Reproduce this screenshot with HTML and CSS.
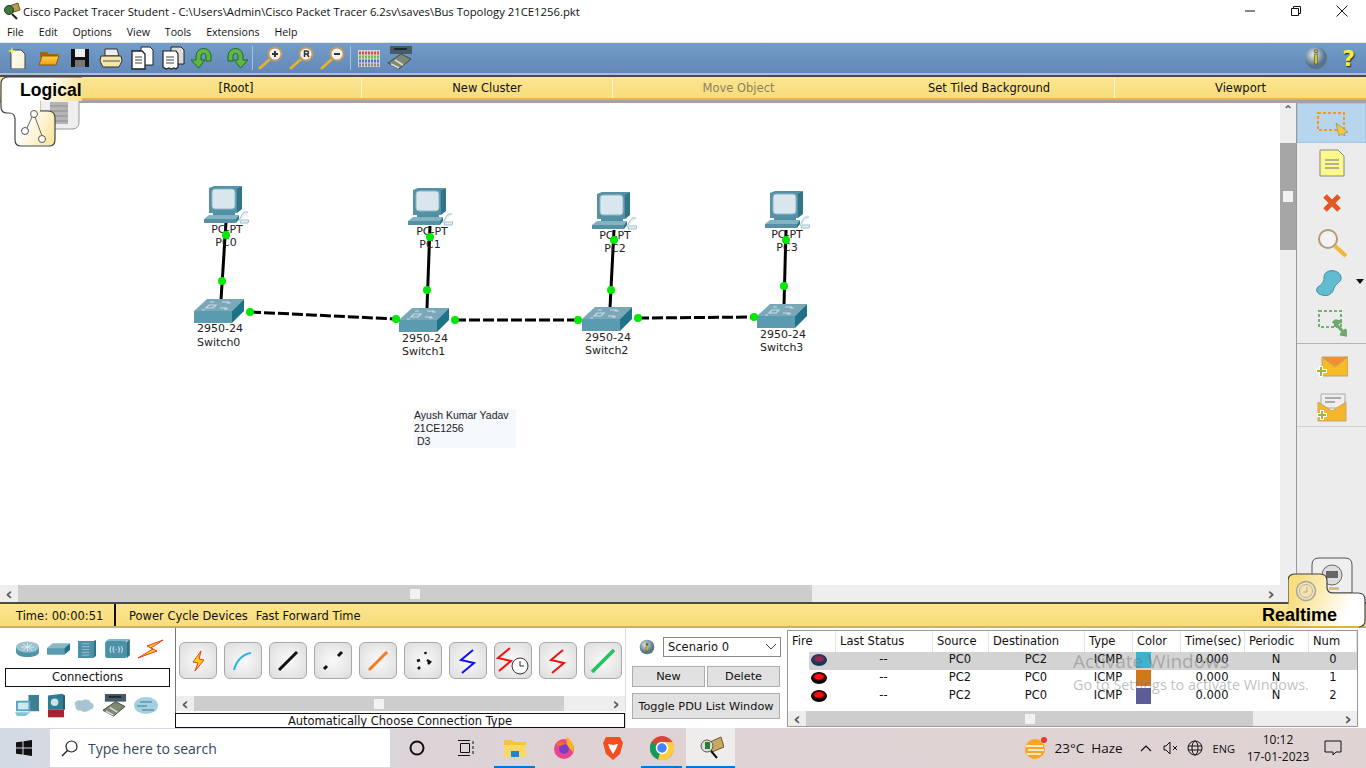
FILE: index.html
```html
<!DOCTYPE html>
<html lang="en">

<head>
    <meta charset="UTF-8">
    <title>Cisco Packet Tracer Student</title>
    <link rel="stylesheet" href="styles.css">
</head>

<body>
    <svg class="defs" width="0" height="0">
        <defs>
            <linearGradient id="gold" x1="0" y1="0" x2="0" y2="1"><stop offset="0" stop-color="#fbd33d"/><stop offset="1" stop-color="#f29a1f"/></linearGradient>
            <linearGradient id="logicalfade" gradientUnits="userSpaceOnUse" x1="15" y1="15" x2="75" y2="45"><stop offset="0" stop-color="#fff"/><stop offset=".35" stop-color="#fff"/><stop offset="1" stop-color="#f9de7e"/></linearGradient>
            <linearGradient id="realfade" gradientUnits="userSpaceOnUse" x1="5" y1="20" x2="60" y2="40"><stop offset="0" stop-color="#f9de7e"/><stop offset="1" stop-color="#fff"/></linearGradient>
            <radialGradient id="ball" cx=".4" cy=".35"><stop offset="0" stop-color="#e8edf2"/><stop offset="1" stop-color="#58748c"/></radialGradient>
            <linearGradient id="docfill" x1="0" y1="0" x2="1" y2="1"><stop offset="0" stop-color="#fff"/><stop offset="1" stop-color="#f3efcf"/></linearGradient>
            <symbol id="pc" viewBox="0 0 45 38">
                <path d="M5 2 10 0h28l-5 2v25H5z" fill="#5590a5"/>
                <path d="M33 2l5-2v23l-5 4z" fill="#2f7488"/>
                <rect x="8" y="3" width="23" height="20" rx="3" fill="#d9e6ee" stroke="#8ab8c7"/>
                <path d="M9 27h22v2H9z" fill="#4f8ea3"/>
                <path d="M5 29h30l-3 4H0z" fill="#82b3c3"/>
                <path d="M0 33h32v4H0z" fill="#5590a5"/>
                <path d="M32 33l3-4v4l-3 4z" fill="#2f7488"/>
                <path d="M35 35c2-4 3-8 6-9h3M36 37h8l1-3h-8z" fill="#e8f0f3" stroke="#9cc0cc"/>
            </symbol>
            <symbol id="switch" viewBox="0 0 50 24">
                <path d="M0 12 13 0h37L38 12z" fill="#7ba8b8"/>
                <path d="M0 12h38v12H0z" fill="#5b9bb0"/>
                <path d="M38 12 50 0v12L38 24z" fill="#1f7389"/>
                <path d="M12 9h7l3-3h-7zM26 9h7M28 3h7M8 11h3M30 10h4M33 4h4M16 3h4" stroke="#c6dbe3" stroke-width="1.2" fill="none"/>
            </symbol>
            <symbol id="bolt" viewBox="0 0 25 20">
                <path d="M25 1 9 7l6 3L0 19l19-7-6-3z" fill="#f9d21f" stroke="#ef3b17" stroke-linejoin="round"/>
            </symbol>
            <symbol id="zoom" viewBox="0 0 26 24">
                <path d="M2 22 11 14" stroke="#e5b22e" stroke-width="3" stroke-linecap="round"/>
                <circle cx="17" cy="8" r="6.500" fill="#f2f2f2" stroke="#c39a5e" stroke-width="2"/>
            </symbol>
            <symbol id="mail" viewBox="0 0 32 24">
                <path d="M6 2h26v19H6z" fill="#f6bb28" stroke="#b9a36d"/>
                <path d="M6 2l13 10L32 2" fill="#f08f33" stroke="#c4a86a"/>
                <path d="M5 11v11M0 16h11" stroke="#fff" stroke-width="4"/>
                <path d="M5 12v9M1 16h9" stroke="#9eb34a" stroke-width="2"/>
            </symbol>
        </defs>
    </svg>

    <header class="title-bar">
        <svg class="app-icon" width="18" height="18" viewBox="0 0 18 18"><path d="M6 4l9-3 2 7-9 3z" fill="#b99b50" stroke="#6b5a2a"/><circle cx="6" cy="8" r="4.500" fill="#3c7a3a" stroke="#333"/><path d="M9 12l5 5" stroke="#222" stroke-width="2"/></svg>
        <span class="title-text">Cisco Packet Tracer Student - C:\Users\Admin\Cisco Packet Tracer 6.2sv\saves\Bus Topology 21CE1256.pkt</span>
        <div class="win-buttons">
            <svg width="12" height="12" viewBox="0 0 12 12"><path d="M1 6h10" stroke="#111"/></svg>
            <svg width="12" height="12" viewBox="0 0 12 12"><path d="M1.500 3.500h7v7h-7zM3.500 3.500v-2h7v7h-2" fill="none" stroke="#111"/></svg>
            <svg width="12" height="12" viewBox="0 0 12 12"><path d="M.5.500l11 11M11.500.500l-11 11" stroke="#111"/></svg>
        </div>
    </header>

    <nav class="menu-bar">
        <span>File</span><span>Edit</span><span>Options</span><span>View</span><span>Tools</span><span>Extensions</span><span>Help</span>
    </nav>

    <div class="tool-bar">
        <button class="tool"><svg width="20" height="22" viewBox="0 0 20 22"><path d="M3 3h10l4 4v15H3z" fill="url(#docfill)" stroke="#444"/><path d="M4 0l1 3 3 1-3 1-1 3-1-3-3-1 3-1z" fill="#f8f04a"/></svg></button>
        <button class="tool"><svg width="22" height="16" viewBox="0 0 22 16"><path d="M2 2h7l2 2h9v3H2z" fill="#a86508"/><path d="M1 15 4 6h17l-3 9z" fill="url(#gold)" stroke="#8a5a08"/></svg></button>
        <button class="tool"><svg width="20" height="20" viewBox="0 0 20 20"><path d="M1 1h18v18H1z" fill="#111"/><path d="M5 1h10v8H5z" fill="#eee"/><path d="M5 12h10v7H5z" fill="#777"/></svg></button>
        <button class="tool"><svg width="24" height="20" viewBox="0 0 24 20"><path d="M6 1h12l2 7H6z" fill="#eee" stroke="#333"/><path d="M2 8h20l1 5-3 6H4l-3-6z" fill="#f3e6a8" stroke="#333"/><path d="M4 13h17" stroke="#555"/></svg></button>
        <button class="tool"><svg width="24" height="24" viewBox="0 0 24 24"><path d="M11 1h9l3 3v15H11z" fill="#fff" stroke="#222"/><path d="M2 5h10l3 3v15H2z" fill="#fff" stroke="#222" stroke-width="1.300"/><path d="M5 11h7M5 14h7M5 17h7" stroke="#444"/></svg></button>
        <button class="tool"><svg width="24" height="24" viewBox="0 0 24 24"><path d="M10 1h10l3 3v14H10z" fill="#ddd" stroke="#222"/><path d="M2 5h13l2 3v13l-2 2-2-1-3 1-2-1-3 1-3-2z" fill="#fff" stroke="#222" stroke-width="1.200"/><path d="M5 11h8M5 14h8M5 17h8" stroke="#444"/></svg></button>
        <button class="tool"><svg width="26" height="24" viewBox="0 0 26 24"><path d="M5 14V10a7 7 0 0 1 15 0v5h-5v-5a2 2 0 0 0-5 0v4h4l-6.500 8L0 14z" fill="#5fb648" stroke="#1e6a1e"/></svg></button>
        <button class="tool"><svg width="26" height="24" viewBox="0 0 26 24"><path d="M21 14V10a7 7 0 0 0-15 0v5h5v-5a2 2 0 0 1 5 0v4h-4l6.500 8L26 14z" fill="#5fb648" stroke="#1e6a1e"/></svg></button>
        <i class="tool-sep"></i>
        <button class="tool"><svg width="26" height="24"><use href="#zoom"/><path d="M14 8h6M17 5v6" stroke="#333" stroke-width="2"/></svg></button>
        <button class="tool"><svg width="26" height="24"><use href="#zoom"/><path d="M15.500 11V5h2.500a1.500 1.500 0 0 1 0 3h-2.500M18 8l2 3" stroke="#333" stroke-width="1.500" fill="none"/></svg></button>
        <button class="tool"><svg width="26" height="24"><use href="#zoom"/><path d="M14 8h6" stroke="#333" stroke-width="2"/></svg></button>
        <i class="tool-sep"></i>
        <button class="tool"><svg width="22" height="17" viewBox="0 0 22 17"><rect width="22" height="17" fill="#d6d6d6"/><path d="M1 3h20" stroke="#d94f4f" stroke-width="3" stroke-dasharray="2 1"/><path d="M1 7h20" stroke="#6fbf4a" stroke-width="3" stroke-dasharray="2 1"/><path d="M1 11h20" stroke="#4a6fd9" stroke-width="3" stroke-dasharray="2 1"/><path d="M1 15h20" stroke="#888" stroke-width="3" stroke-dasharray="2 1"/></svg></button>
        <button class="tool"><svg width="26" height="26" viewBox="0 0 26 26"><path d="M3 1h22v8H3z" fill="#475a68"/><path d="M7 3h13v2H7z" fill="#1c2a33"/><path d="M1 18 14 9l10 5-12 10z" fill="#7d8a72" stroke="#444"/><path d="M4 19l8 4M8 15l8 5" stroke="#ddd" stroke-width="1.500"/></svg></button>
        <div class="tool-right">
            <svg width="24" height="24" viewBox="0 0 24 24"><circle cx="12" cy="12" r="11" fill="url(#ball)"/><text x="12" y="18" class="info-i">i</text></svg>
            <span class="help-mark">?</span>
        </div>
    </div>

    <div class="tab-bar">
        <span class="tab-cell">[Root]</span>
        <span class="tab-cell">New Cluster</span>
        <span class="tab-cell disabled no-line">Move Object</span>
        <span class="tab-cell">Set Tiled Background</span>
        <span class="tab-cell">Viewport</span>
    </div>

    <main class="work-row">
        <div class="canvas-wrap">
            <div class="canvas-col">
                <div class="canvas">
                    <svg class="links" width="1280" height="483" viewBox="0 103 1280 483">
                        <g class="link"><path d="M226 222 221 300"/><path d="M430 226 427 308"/><path d="M614 230 610 308"/><path d="M786 230 784 305"/></g>
                        <g class="link dashed"><path d="M250 312 396 319"/><path d="M455 320 578 320"/><path d="M638 318 754 317"/></g>
                        <use href="#pc" x="204" y="186" width="45" height="38"/>
                        <use href="#pc" x="408" y="188" width="45" height="38"/>
                        <use href="#pc" x="592" y="192" width="45" height="38"/>
                        <use href="#pc" x="765" y="191" width="45" height="38"/>
                        <use href="#switch" x="194" y="299" width="50" height="24"/>
                        <use href="#switch" x="399" y="308" width="50" height="24"/>
                        <use href="#switch" x="582" y="307" width="50" height="24"/>
                        <use href="#switch" x="757" y="304" width="50" height="24"/>
                    </svg>
                    <span class="label c" style="left:227px;top:120px">PC-PT</span>
                    <span class="label c" style="left:226px;top:133px">PC0</span>
                    <span class="label c" style="left:432px;top:122px">PC-PT</span>
                    <span class="label c" style="left:430px;top:135px">PC1</span>
                    <span class="label c" style="left:615px;top:126px">PC-PT</span>
                    <span class="label c" style="left:615px;top:139px">PC2</span>
                    <span class="label c" style="left:787px;top:125px">PC-PT</span>
                    <span class="label c" style="left:787px;top:138px">PC3</span>
                    <span class="label" style="left:197px;top:219px">2950-24</span>
                    <span class="label" style="left:197px;top:233px">Switch0</span>
                    <span class="label" style="left:402px;top:229px">2950-24</span>
                    <span class="label" style="left:402px;top:242px">Switch1</span>
                    <span class="label" style="left:585px;top:228px">2950-24</span>
                    <span class="label" style="left:585px;top:241px">Switch2</span>
                    <span class="label" style="left:760px;top:225px">2950-24</span>
                    <span class="label" style="left:760px;top:238px">Switch3</span>
                    <svg class="links" width="1280" height="483" viewBox="0 103 1280 483">
                        <g class="dot">
                            <circle cx="226" cy="235" r="4"/><circle cx="222" cy="281" r="4"/>
                            <circle cx="430" cy="237" r="4"/><circle cx="427" cy="290" r="4"/>
                            <circle cx="614" cy="240" r="4"/><circle cx="611" cy="290" r="4"/>
                            <circle cx="786" cy="240" r="4"/><circle cx="784" cy="286" r="4"/>
                            <circle cx="250" cy="312" r="4"/><circle cx="396" cy="319" r="4"/>
                            <circle cx="455" cy="320" r="4"/><circle cx="578" cy="320" r="4"/>
                            <circle cx="638" cy="318" r="4"/><circle cx="754" cy="317" r="4"/>
                        </g>
                    </svg>
                    <div class="note">Ayush Kumar Yadav<br>21CE1256<br>&nbsp;D3</div>
                </div>
                <div class="scroll-h">
                    <span class="arrow">&#8249;</span>
                    <div class="track"><div class="thumb" style="width:794px"><i></i></div></div>
                    <span class="arrow">&#8250;</span>
                </div>
            </div>
            <div class="scroll-v">
                <span class="arrow up">&#8963;</span>
                <div class="thumb-v"><i></i></div>
            </div>
        </div>

        <aside class="side-bar">
            <div class="side-item selected"><svg width="32" height="26" viewBox="0 0 32 26"><path d="M2 3h26v17H2z" fill="none" stroke="#f39c12" stroke-width="2" stroke-dasharray="3 2"/><path d="M20 13l12 9-4 1 1 3-4-2-2 2z" fill="#f5c930" stroke="#888" stroke-width=".7"/></svg></div>
            <div class="side-item"><svg width="26" height="28" viewBox="0 0 26 28"><path d="M1 1h18l6 6v20H1z" fill="#fdf88a" stroke="#888"/><path d="M6 11h14M6 15h14M6 19h14" stroke="#999" stroke-width="1.300"/></svg></div>
            <div class="side-item"><svg width="20" height="20" viewBox="0 0 20 20"><path d="M3 3l14 14M17 3 3 17" stroke="#e25822" stroke-width="5"/></svg></div>
            <div class="side-item"><svg width="32" height="30" viewBox="0 0 32 30"><circle cx="12" cy="11" r="9" fill="#f2f2f2" stroke="#b59a78" stroke-width="2"/><path d="M19 18 30 28" stroke="#f2b632" stroke-width="4"/></svg></div>
            <div class="side-item"><svg class="blob" width="26" height="27" viewBox="0 0 26 27"><path d="M11 2C15-1 24 1 25 7 26 12 20 13 18 18 17 24 11 27 6 25 1 24-1 20 2 17 6 14 8 12 8 8 8 5 9 3 11 2z" fill="#62bccf" stroke="#3c8fa5"/></svg><i class="caret"></i></div>
            <div class="side-item"><svg width="30" height="28" viewBox="0 0 30 28"><path d="M2 2h22v16H2z" fill="none" stroke="#6fb36f" stroke-width="2" stroke-dasharray="3 2"/><path d="M16 12l13 14M18 18l1-6 6 1M28 20l1 6-6-1" fill="#6fa86f" stroke="#6fa86f" stroke-width="3"/></svg></div>
            <div class="side-group">
                <div class="side-item mail"><svg width="32" height="24"><use href="#mail"/></svg></div>
                <div class="side-item mail"><svg width="32" height="30" viewBox="0 0 32 30"><path d="M5 2h24v14H5z" fill="#eee" stroke="#aaa"/><path d="M9 6h16M9 10h10" stroke="#aaa" stroke-width="2"/><path d="M2 10v19h28V10L16 19z" fill="#f6b62c" stroke="#c4a86a"/><path d="M6 18v10M1 23h10" stroke="#fff" stroke-width="4"/><path d="M6 19v8M2 23h8" stroke="#9eb34a" stroke-width="2"/></svg></div>
            </div>
        </aside>
    </main>

    <div class="status-bar">
        <span class="time-cell">Time: 00:00:51</span>
        <span class="status-links"><span>Power Cycle Devices</span><span>Fast Forward Time</span></span>
    </div>

    <section class="bottom">
        <div class="device-panel">
            <div class="device-row">
                <svg width="23" height="16" viewBox="0 0 23 16"><path d="M0 6v5c0 3 5 5 11.500 5S23 14 23 11V6z" fill="#4e93a9"/><ellipse cx="11.500" cy="6" rx="11.500" ry="5.500" fill="#9bc3cf"/><path d="M5 6h13M11.500 2v8M7 3l9 6M16 3l-9 6" stroke="#e6f0f3" stroke-width=".8"/></svg>
                <svg width="23" height="12" viewBox="0 0 24 12"><path d="M0 5 6 0h18l-6 5z" fill="#8db6c3"/><path d="M0 5h18v7H0z" fill="#5b9bb0"/><path d="M18 5l6-5v7l-6 5z" fill="#1f7389"/></svg>
                <svg width="19" height="18" viewBox="0 0 20 19"><path d="M0 1h16v18H0z" fill="#4c91a8"/><path d="M16 1l3-1v17l-3 2z" fill="#2f7488"/><path d="M4 4h8M4 7h8M4 10h8M4 13h8M4 16h8" stroke="#88b8c6" stroke-width="1.200"/></svg>
                <svg width="25" height="19" viewBox="0 0 26 20"><rect y="2" width="23" height="18" rx="2" fill="#4c91a8"/><path d="M23 3l3-3v17l-3 3z" fill="#2f7488"/><path d="M1 2 4 0h22l-3 2z" fill="#86b6c5"/><text x="11.500" y="14" class="wifi">((·))</text></svg>
                <svg width="25" height="20"><use href="#bolt"/></svg>
            </div>
            <div class="device-label">Connections</div>
            <div class="device-row lower">
                <svg width="25" height="23" viewBox="0 0 26 24"><path d="M14 1h11v17H14z" fill="#3f7f93"/><path d="M1 7h15v11H1z" fill="#5ba6bd"/><path d="M3 9h11v7H3z" fill="#cfe7ee"/><path d="M0 19h16l-5 4H2z" fill="#7fc3d4"/></svg>
                <svg width="18" height="25" viewBox="0 0 19 25"><path d="M1 2l15-2v17H1z" fill="#2e7d95"/><path d="M16 0l3 2v15h-3z" fill="#1f5f72"/><circle cx="8" cy="9" r="4" fill="#cfe2e8"/><path d="M1 17h17v8H1z" fill="#a5252f"/></svg>
                <svg width="23" height="13" viewBox="0 0 24 15"><path d="M3 8c-4-5 4-8 7-6 4-3 10-1 10 2 5 1 5 7 0 8-4 4-10 3-12 1-3 1-6-2-5-5z" fill="#a7c5d1"/></svg>
                <svg width="25" height="27" viewBox="0 0 26 26"><path d="M3 1h22v8H3z" fill="#475a68"/><path d="M7 3h13v2H7z" fill="#1c2a33"/><path d="M1 18 14 9l10 5-12 10z" fill="#7d8a72" stroke="#444"/><path d="M4 19l8 4M8 15l8 5" stroke="#ddd" stroke-width="1.500"/></svg>
                <svg width="24" height="17" viewBox="0 0 24 17"><ellipse cx="12" cy="8.500" rx="12" ry="8.500" fill="#a4d0df"/><path d="M6 5h12M3 9h10M8 13h12" stroke="#5b97ae" stroke-width="1.500"/></svg>
            </div>
        </div>

        <div class="conn-panel">
            <div class="conn-row">
                <div class="conn-btn"><svg width="14" height="22" viewBox="0 0 14 22"><path d="M10 1 2 12l5 1-3 8 9-11-5-1z" fill="#f9d21f" stroke="#ef3b17"/></svg></div>
                <div class="conn-btn"><svg width="24" height="24" viewBox="0 0 24 24"><path d="M3 21C5 12 12 5 20 4" stroke="#27b3e8" stroke-width="2" fill="none"/></svg></div>
                <div class="conn-btn"><svg width="24" height="24" viewBox="0 0 24 24"><path d="M3 21 21 3" stroke="#111" stroke-width="3"/></svg></div>
                <div class="conn-btn"><svg width="24" height="24" viewBox="0 0 24 24"><path d="M3 20 6 17M17 7 21 3" stroke="#111" stroke-width="3"/></svg></div>
                <div class="conn-btn"><svg width="24" height="24" viewBox="0 0 24 24"><path d="M3 21 21 3" stroke="#f47a1f" stroke-width="3"/></svg></div>
                <div class="conn-btn"><svg width="24" height="24" viewBox="0 0 24 24"><path d="M14 3l1 2M6 12l3-1M16 11l3 2-2 2M7 20l2-2" stroke="#111" stroke-width="2.500" fill="none"/></svg></div>
                <div class="conn-btn"><svg width="24" height="26" viewBox="0 0 24 26"><path d="M17 2 5 12l13 3-12 10" stroke="#1010f0" stroke-width="2" fill="none"/></svg></div>
                <div class="conn-btn"><svg width="36" height="30" viewBox="0 0 36 30"><path d="M15 2 3 12l13 3-12 10" stroke="#f01010" stroke-width="2" fill="none"/><circle cx="25" cy="20" r="8" fill="#fff" stroke="#333"/><path d="M25 15v5h4" stroke="#333" fill="none"/></svg></div>
                <div class="conn-btn"><svg width="24" height="26" viewBox="0 0 24 26"><path d="M17 2 5 12l13 3-12 10" stroke="#f01010" stroke-width="2" fill="none"/></svg></div>
                <div class="conn-btn"><svg width="28" height="28" viewBox="0 0 28 28"><path d="M3 25 25 3" stroke="#1fc45a" stroke-width="3.500"/></svg></div>
            </div>
            <div class="scroll-h small">
                <span class="arrow">&#8249;</span>
                <div class="track"><div class="thumb" style="width:370px"><i></i></div></div>
                <span class="arrow">&#8250;</span>
            </div>
            <div class="conn-label">Automatically Choose Connection Type</div>
        </div>

        <div class="scenario-panel">
            <div class="scenario-top">
                <svg width="16" height="16" viewBox="0 0 24 24"><circle cx="12" cy="12" r="11" fill="url(#ball)"/><text x="12" y="18" class="info-i">i</text></svg>
                <div class="select">Scenario 0<svg width="12" height="8" viewBox="0 0 12 8"><path d="M1 1l5 5 5-5" fill="none" stroke="#444"/></svg></div>
            </div>
            <div class="scenario-btns">
                <button class="grey-btn">New</button>
                <button class="grey-btn">Delete</button>
            </div>
            <button class="grey-btn wide">Toggle PDU List Window</button>
        </div>

        <div class="pdu-panel">
            <div class="pdu-grid pdu-head">
                <span>Fire</span><span>Last Status</span><span>Source</span><span>Destination</span><span>Type</span><span>Color</span><span>Time(sec)</span><span>Periodic</span><span>Num</span>
            </div>
            <div class="pdu-grid pdu-row current">
                <span class="fire"><i class="led dim"></i></span><span>--</span><span>PC0</span><span>PC2</span><span>ICMP</span><span><i class="swatch blue"></i></span><span>0.000</span><span>N</span><span class="num">0</span>
            </div>
            <div class="pdu-grid pdu-row">
                <span class="fire"><i class="led"></i></span><span>--</span><span>PC2</span><span>PC0</span><span>ICMP</span><span><i class="swatch orange"></i></span><span>0.000</span><span>N</span><span class="num">1</span>
            </div>
            <div class="pdu-grid pdu-row">
                <span class="fire"><i class="led"></i></span><span>--</span><span>PC2</span><span>PC0</span><span>ICMP</span><span><i class="swatch navy"></i></span><span>0.000</span><span>N</span><span class="num">2</span>
            </div>
            <div class="scroll-h small pdu-scroll">
                <span class="arrow">&#8249;</span>
                <div class="track"><div class="thumb" style="width:447px"><i></i></div></div>
                <span class="arrow">&#8250;</span>
            </div>
        </div>
    </section>

    <footer class="task-bar">
        <svg class="win-logo" width="16" height="16" viewBox="0 0 16 16"><path d="M0 2.300 6.500 1.400V7.500H0zM7.500 1.300 16 0V7.500H7.500zM0 8.500H6.500V14.600L0 13.700zM7.500 8.500H16V16L7.500 14.700z" fill="#111"/></svg>
        <div class="search-box">
            <svg width="17" height="17" viewBox="0 0 17 17"><circle cx="10.500" cy="6.500" r="5.500" fill="none" stroke="#222" stroke-width="1.200"/><path d="M6.500 10.500 1 16" stroke="#222" stroke-width="1.500"/></svg>
            <span>Type here to search</span>
        </div>
        <div class="task-icons">
            <div class="task-item"><svg width="16" height="16" viewBox="0 0 16 16"><circle cx="8" cy="8" r="6.500" fill="none" stroke="#111" stroke-width="2"/></svg></div>
            <div class="task-item"><svg width="18" height="16" viewBox="0 0 18 16"><path d="M3.500 3.500h9v9h-9zM1 .500h12M1 15.500h12M16 1v3M16 6v3M16 11v3" fill="none" stroke="#111"/></svg></div>
            <div class="task-item open"><svg width="22" height="20" viewBox="0 0 22 20"><path d="M0 2h8l2 2h12v14H0z" fill="#f5c242"/><path d="M0 7h22v12H0z" fill="#fbd766"/><path d="M7 13h8v6H7z" fill="#1b87d4"/></svg></div>
            <div class="task-item"><svg width="24" height="24" viewBox="0 0 24 24"><circle cx="12" cy="13" r="10" fill="#e8478b"/><path d="M14 1c7 3 9 10 7 15-2-3-5-4-6-7z" fill="#ffb41f"/><circle cx="12" cy="13" r="5" fill="#7b3fc7"/><path d="M4 8c3-3 8-2 9 0l-5 2z" fill="#f97316"/></svg></div>
            <div class="task-item"><svg width="20" height="24" viewBox="0 0 20 24"><path d="M3 1h14l3 6-3 11-7 6-7-6L0 7z" fill="#f04e23"/><path d="M5 8l5 1 5-1-2 5-3 5-3-5z" fill="#fff"/></svg></div>
            <div class="task-item open"><svg width="24" height="24" viewBox="0 0 24 24"><circle cx="12" cy="12" r="12" fill="#db4437"/><path d="M12 12 1.600 6A12 12 0 0 0 8 23.300z" fill="#0f9d58"/><path d="M12 6h10.500A12 12 0 0 1 8 23.300L12 12z" fill="#ffcd40"/><circle cx="12" cy="12" r="5.500" fill="#4285f4" stroke="#fff" stroke-width="1.500"/></svg></div>
            <div class="task-item open active"><svg width="26" height="26" viewBox="0 0 26 26"><path d="M10 8l13-6 3 10-12 5z" fill="#c8a860" stroke="#6b5a2a"/><circle cx="9" cy="11" r="6" fill="#ddd" stroke="#555"/><path d="M7 7h5v7H7z" fill="#2e7d2e"/><path d="M13 16l6 7" stroke="#111" stroke-width="2"/></svg></div>
        </div>
        <div class="tray">
            <svg width="22" height="22" viewBox="0 0 22 22"><circle cx="10" cy="12" r="10" fill="#f5a623"/><path d="M1 9h17M3 13h16M2 17h14" stroke="#fff" stroke-width="1.500"/><circle cx="19" cy="3" r="3" fill="#e23c2a"/></svg>
            <span class="weather">23°C&nbsp; Haze</span>
            <svg class="chev" width="12" height="8" viewBox="0 0 12 8"><path d="M1 7l5-5 5 5" fill="none" stroke="#111" stroke-width="1.200"/></svg>
            <svg width="16" height="14" viewBox="0 0 16 14"><path d="M1 5h2l4-4v12L3 9H1zM10 5l4 4M14 5l-4 4" fill="none" stroke="#111"/></svg>
            <svg width="16" height="16" viewBox="0 0 16 16"><circle cx="8" cy="8" r="7" fill="none" stroke="#111"/><ellipse cx="8" cy="8" rx="3" ry="7" fill="none" stroke="#111"/><path d="M1 6h14M1 10h14" stroke="#111"/></svg>
            <span class="lang">ENG</span>
            <div class="clock"><span>10:12</span><span>17-01-2023</span></div>
            <svg class="notify" width="18" height="16" viewBox="0 0 18 16"><path d="M1 1h16v11h-5l-3 3v-3H1z" fill="none" stroke="#111"/></svg>
        </div>
    </footer>

    <!-- tabs sit over the bars -->
    <div class="mode-tab logical">
        <svg width="82" height="72" viewBox="0 0 82 72">
            <path d="M40 25h39v22q0 7-7 7H50V36H40z" fill="#efefef" stroke="#999"/>
            <path d="M50 27h18v22H50z" fill="#b5b5b5"/>
            <path d="M50 31h18M50 36h18M50 41h18M50 46h18" stroke="#8d8d8d"/>
            <path d="M1 9q0-7 7-7h74v24H40v10h8q7 0 7 7v21q0 6-6 6H21q-6 0-6-6V44q0-6-6-6H7q-6 0-6-6z" fill="url(#logicalfade)"/>
            <path d="M82 2H8q-7 0-7 7v23q0 6 6 6h2q6 0 6 6v21q0 6 6 6h28q6 0 6-6V43q0-7-7-7h-8" fill="none" stroke="#444" stroke-width="1.200"/>
            <path d="M32 42 27 53M35 42l7 19" stroke="#666" fill="none"/>
            <circle cx="34" cy="39" r="3.500" fill="#fff" stroke="#555"/><circle cx="25" cy="56" r="3.500" fill="#fff" stroke="#555"/><circle cx="42" cy="64" r="3.500" fill="#fff" stroke="#555"/>
        </svg>
        <span>Logical</span>
    </div>
    <div class="mode-tab behind-tab">
        <svg width="42" height="36" viewBox="0 0 42 36">
            <path d="M1 36V8q0-7 7-7h26q7 0 7 7v28z" fill="#efefef" stroke="#555"/>
            <circle cx="21" cy="18" r="10" fill="#ddd" stroke="#666"/><path d="M15 14h12v7H15z" fill="#666"/><path d="M18 30h10v3H18z" fill="#d8c36a"/>
        </svg>
    </div>
    <div class="mode-tab realtime">
        <svg width="78" height="55" viewBox="0 0 78 55">
            <path d="M0 31V8q0-7 7-7h25q7 0 7 7v6q0 6 6 6h25q7 0 7 7v21q0 6-6 6H0z" fill="url(#realfade)"/>
            <path d="M0 31V8q0-7 7-7h25q7 0 7 7v6q0 6 6 6h25q7 0 7 7v21q0 5-6 6" fill="none" stroke="#444" stroke-width="1.200"/>
            <path d="M0 54h71" stroke="#d9b53f" stroke-width="2"/>
            <circle cx="18" cy="18" r="9.500" fill="#f6e4ad" stroke="#a5a5a5" stroke-width="1.500"/><circle cx="18" cy="18" r="6.500" fill="none" stroke="#b0b0b0"/><path d="M19 14v5h-4" stroke="#aaa" fill="none"/>
        </svg>
        <span>Realtime</span>
    </div>
    <div class="watermark">
        <div class="wm-big">Activate Windows</div>
        <div class="wm-small">Go to Settings to activate Windows.</div>
    </div>
</body>

</html>
```

FILE: styles.css
```css
* {
    margin: 0;
    padding: 0;
    box-sizing: border-box;
}

html,
body {
    width: 1366px;
    height: 768px;
    overflow: hidden;
}

body {
    position: relative;
    display: flex;
    flex-direction: column;
    background: #fff;
    color: #111;
    font-family: 'DejaVu Sans', sans-serif;
    font-size: 11.500px;
}

.defs {
    position: absolute;
}

/* window chrome */
.title-bar {
    height: 22px;
    display: flex;
    align-items: center;
    padding-left: 3px;
    font-family: 'Open Sans', sans-serif;
    font-size: 11.300px;
}

.app-icon {
    margin-right: 2px;
}

.win-buttons {
    margin-left: auto;
    display: flex;
    gap: 34px;
    padding-right: 18px;
}

.menu-bar {
    height: 21px;
    display: flex;
    align-items: center;
    gap: 15px;
    padding-left: 7px;
    font-family: 'Open Sans', sans-serif;
    font-size: 10.600px;
    border-bottom: 1px solid #e6e6e6;
}

.tool-bar {
    height: 32px;
    display: flex;
    align-items: center;
    padding-left: 2px;
    background: linear-gradient(#739dc9, #6288b8);
    border-bottom: 2px solid #a9bed4;
}

.tool {
    width: 31px;
    height: 30px;
    display: flex;
    align-items: center;
    justify-content: center;
    background: none;
    border: none;
}

.tool-sep {
    width: 1px;
    height: 24px;
    margin: 0 2px;
    background: #a8c0dc;
}

.tool-right {
    margin-left: auto;
    display: flex;
    align-items: center;
    gap: 14px;
    padding-right: 11px;
}

.info-i {
    font-size: 17px;
    font-weight: bold;
    text-anchor: middle;
    fill: #d8c91f;
    stroke: #333;
    stroke-width: .5px;
}

.help-mark {
    font-size: 22px;
    font-weight: bold;
    color: #f2ef3c;
    text-shadow: 1px 1px 1px #222;
}

.tab-bar {
    height: 28px;
    display: flex;
    padding-left: 111px;
    padding-top: 1px;
    background: linear-gradient(#fbe592, #f8dc78);
    border-top: 2px solid #4a4a4a;
    border-bottom: 3px solid #a3a3a3;
    box-shadow: inset 0 -2px #e4b93a;
}

.tab-cell {
    width: 251px;
    display: flex;
    align-items: center;
    justify-content: center;
    margin-bottom: 2px;
    border-right: 1.500px solid #fff5cf;
}

.tab-cell:last-child,
.tab-cell.no-line {
    border-right: none;
}

.disabled {
    color: #8c8262;
}

/* main work area */
.work-row {
    flex: 1;
    min-height: 0;
    display: flex;
}

.canvas-wrap {
    width: 1297px;
    display: flex;
    border-right: 1px solid #9a9a9a;
}

.canvas-col {
    width: 1280px;
    display: flex;
    flex-direction: column;
}

.canvas {
    flex: 1;
    position: relative;
    overflow: hidden;
}

.links {
    position: absolute;
    left: 0;
    top: 0;
}

.link path {
    stroke: #000;
    stroke-width: 3px;
    fill: none;
}

.link.dashed path {
    stroke-dasharray: 11 3;
}

.dot circle {
    fill: #00e900;
}

.label {
    position: absolute;
    font-size: 11px;
    line-height: 13px;
    white-space: nowrap;
    color: #222;
}

.label.c {
    transform: translateX(-50%);
}

.note {
    position: absolute;
    left: 413px;
    top: 306px;
    width: 103px;
    height: 39px;
    padding-left: 1px;
    background: #f5f8fc;
    font-family: 'Liberation Sans', sans-serif;
    font-size: 10.500px;
    line-height: 13px;
    color: #222;
}

.scroll-h {
    height: 17px;
    display: flex;
    align-items: center;
    background: #eee;
}

.scroll-h .arrow {
    width: 18px;
    text-align: center;
    font-size: 17px;
    font-weight: bold;
    line-height: 14px;
    color: #555;
}

.track {
    flex: 1;
    height: 100%;
}

.thumb {
    height: 100%;
    display: flex;
    align-items: center;
    justify-content: center;
    background: #cdcdcd;
}

.thumb i {
    width: 10px;
    height: 10px;
    background: #f2f2f2;
}

.scroll-v {
    width: 16px;
    background: #eee;
}

.scroll-v .arrow {
    display: block;
    height: 40px;
    text-align: center;
    font-size: 12px;
    font-weight: bold;
    color: #555;
}

.thumb-v {
    height: 107px;
    display: flex;
    justify-content: center;
    padding-top: 48px;
    background: #a6a6a6;
}

.thumb-v i {
    width: 10px;
    height: 11px;
    background: #f2f2f2;
}

.side-bar {
    flex: 1;
    display: flex;
    flex-direction: column;
    background: #ececec;
}

.side-item {
    position: relative;
    height: 40px;
    display: flex;
    align-items: center;
    justify-content: center;
}

.side-item.selected {
    background: #b8d5ee;
    border: 1px solid #a3c6e6;
}

.blob {
    margin-right: 6px;
}

.caret {
    position: absolute;
    right: 2px;
    top: 16px;
    border: 4px solid transparent;
    border-top: 5px solid #111;
}

.side-group {
    padding-top: 3px;
    border-top: 1px solid #b5b5b5;
    border-bottom: 1px solid #d0d0d0;
}

.side-item.mail + .side-item.mail {
    height: 39px;
}

/* simulation status */
.status-bar {
    height: 26px;
    display: flex;
    align-items: center;
    background: linear-gradient(#fbe592, #f8dc78);
    border-top: 2px solid #4a4a4a;
    border-bottom: 2px solid #c9b45a;
}

.time-cell {
    width: 116px;
    height: 100%;
    display: flex;
    align-items: center;
    padding: 1px 0 0 16px;
    border-right: 2px solid #111;
}

.status-links {
    display: flex;
    gap: 8px;
    padding: 1px 0 0 13px;
}

.bottom {
    height: 100px;
    display: flex;
}

.device-panel {
    width: 175px;
    padding: 9px 5px 0;
}

.device-row {
    height: 23px;
    display: flex;
    align-items: center;
    gap: 8px;
    padding-left: 11px;
}

.device-row.lower {
    height: 26px;
    margin-top: 5px;
    padding-left: 10px;
    gap: 7px;
}

.wifi {
    font-size: 8px;
    text-anchor: middle;
    fill: #fff;
}

.device-label {
    height: 19px;
    margin-top: 8px;
    border: 1px solid #111;
    text-align: center;
    line-height: 17px;
}

.conn-panel {
    width: 450px;
    display: flex;
    flex-direction: column;
    border-left: 1px solid #777;
}

.conn-row {
    height: 68px;
    display: flex;
    gap: 7px;
    padding: 14px 0 0 3px;
}

.conn-btn {
    width: 38px;
    height: 37px;
    flex: none;
    display: flex;
    align-items: center;
    justify-content: center;
    border: 1px solid #a8a8a8;
    border-radius: 6px;
    background: radial-gradient(#fafafa, #dcdcdc);
}

.scroll-h.small {
    height: 15px;
}

.conn-label {
    height: 15px;
    margin: 2px 0 0 -1px;
    border: 1px solid #111;
    text-align: center;
    line-height: 15px;
}

.scenario-panel {
    width: 162px;
    padding: 9px 6px 0;
    border-left: 1px solid #ddd;
}

.scenario-top {
    display: flex;
    align-items: center;
    gap: 8px;
    padding-left: 7px;
}

.select {
    width: 118px;
    height: 20px;
    display: flex;
    align-items: center;
    justify-content: space-between;
    padding: 0 3px 0 4px;
    border: 1px solid #888;
}

.scenario-btns {
    display: flex;
    gap: 2px;
    margin-top: 9px;
}

.grey-btn {
    height: 21px;
    width: 73px;
    background: #e1e1e1;
    border: 1px solid #adadad;
    font-family: 'DejaVu Sans', sans-serif;
    font-size: 11.300px;
    color: #111;
}

.grey-btn.wide {
    width: 148px;
    height: 26px;
    margin-top: 6px;
}

.pdu-panel {
    width: 571px;
    height: 97px;
    margin-top: 2px;
    border: 1px solid #999;
}

.pdu-grid {
    display: grid;
    grid-template-columns: 48px 97px 56px 96px 48px 48px 64px 64px 48px;
}

.pdu-head {
    height: 21px;
    line-height: 21px;
}

.pdu-head span {
    padding-left: 4px;
    border-right: 1px solid #e4e4e4;
}

.pdu-row {
    height: 18px;
    line-height: 14px;
    text-align: center;
}

.pdu-row span {
    padding-right: 2px;
}

.pdu-row.current {
    background: linear-gradient(to right, #fff 21px, #d3d3d3 21px);
}

.fire {
    position: relative;
}

.led {
    position: absolute;
    left: 23px;
    top: 2px;
    width: 16px;
    height: 12px;
    border-radius: 50%;
    background: radial-gradient(closest-side at 50% 40%, #ff1010 45%, #6a0000 70%, #000 90%);
}

.led.dim {
    background: radial-gradient(closest-side at 50% 40%, #93284f 45%, #17395c 80%);
}

.swatch {
    display: block;
    width: 15px;
    height: 16px;
    margin-left: 3px;
}

.blue { background: #3fb2d0; }
.orange { background: #cf7a16; }
.navy { background: #5c5c96; }

.num {
    padding-left: 2px;
}

.pdu-scroll {
    margin-top: 5px;
}

/* windows taskbar */
.task-bar {
    height: 40px;
    display: flex;
    align-items: center;
    background: linear-gradient(to right, #d4dae4, #ded2d4 40%, #dfd3d3);
}

.win-logo {
    margin: 0 17px 0 16px;
}

.search-box {
    width: 342px;
    height: 100%;
    display: flex;
    align-items: center;
    gap: 10px;
    padding-left: 11px;
    background: #fff;
    border: 1px solid #d4dae4;
    font-family: 'Open Sans', sans-serif;
    font-size: 14px;
    color: #36475a;
}

.task-icons {
    display: flex;
    height: 100%;
    padding-left: 1px;
}

.task-item {
    position: relative;
    width: 49px;
    height: 100%;
    display: flex;
    align-items: center;
    justify-content: center;
}

.task-item.open::after {
    content: '';
    position: absolute;
    left: 4px;
    right: 4px;
    bottom: 0;
    height: 2px;
    background: #0078d7;
}

.task-item.active {
    background: #efecec;
}

.task-item.active::after {
    left: 0;
    right: 0;
}

.tray {
    margin-left: auto;
    display: flex;
    align-items: center;
    font-family: 'Open Sans', sans-serif;
    font-size: 12px;
    padding-right: 24px;
}

.weather {
    margin-left: 7px;
    font-size: 13.500px;
}

.chev {
    margin: 0 11px 0 17px;
}

.tray svg + svg {
    margin-right: 8px;
}

.lang {
    margin-left: 2px;
    font-size: 11px;
}

.clock {
    width: 80px;
    margin-left: 3px;
    display: flex;
    flex-direction: column;
    align-items: center;
    gap: 2px;
    line-height: 15px;
}

.notify {
    margin-left: 6px;
}

/* overlays */
.mode-tab {
    position: absolute;
}

.mode-tab span {
    position: absolute;
    font-weight: bold;
    font-family: 'Liberation Sans', sans-serif;
    color: #000;
}

.logical {
    left: 0;
    top: 75px;
    width: 82px;
    height: 72px;
}

.logical span {
    left: 20px;
    top: 5px;
    font-size: 17.600px;
}

.behind-tab {
    left: 1311px;
    top: 557px;
}

.realtime {
    left: 1288px;
    top: 573px;
    width: 78px;
    height: 55px;
}

.realtime span {
    left: -26px;
    top: 32px;
    font-size: 18px;
}

.watermark {
    position: absolute;
    left: 1073px;
    top: 649px;
    color: rgba(110, 110, 110, .45);
    font-family: 'Open Sans', sans-serif;
    pointer-events: none;
}

.wm-big {
    font-size: 19px;
    line-height: 24px;
}

.wm-small {
    font-size: 14.400px;
    line-height: 18px;
    margin-top: 3px;
}
```
